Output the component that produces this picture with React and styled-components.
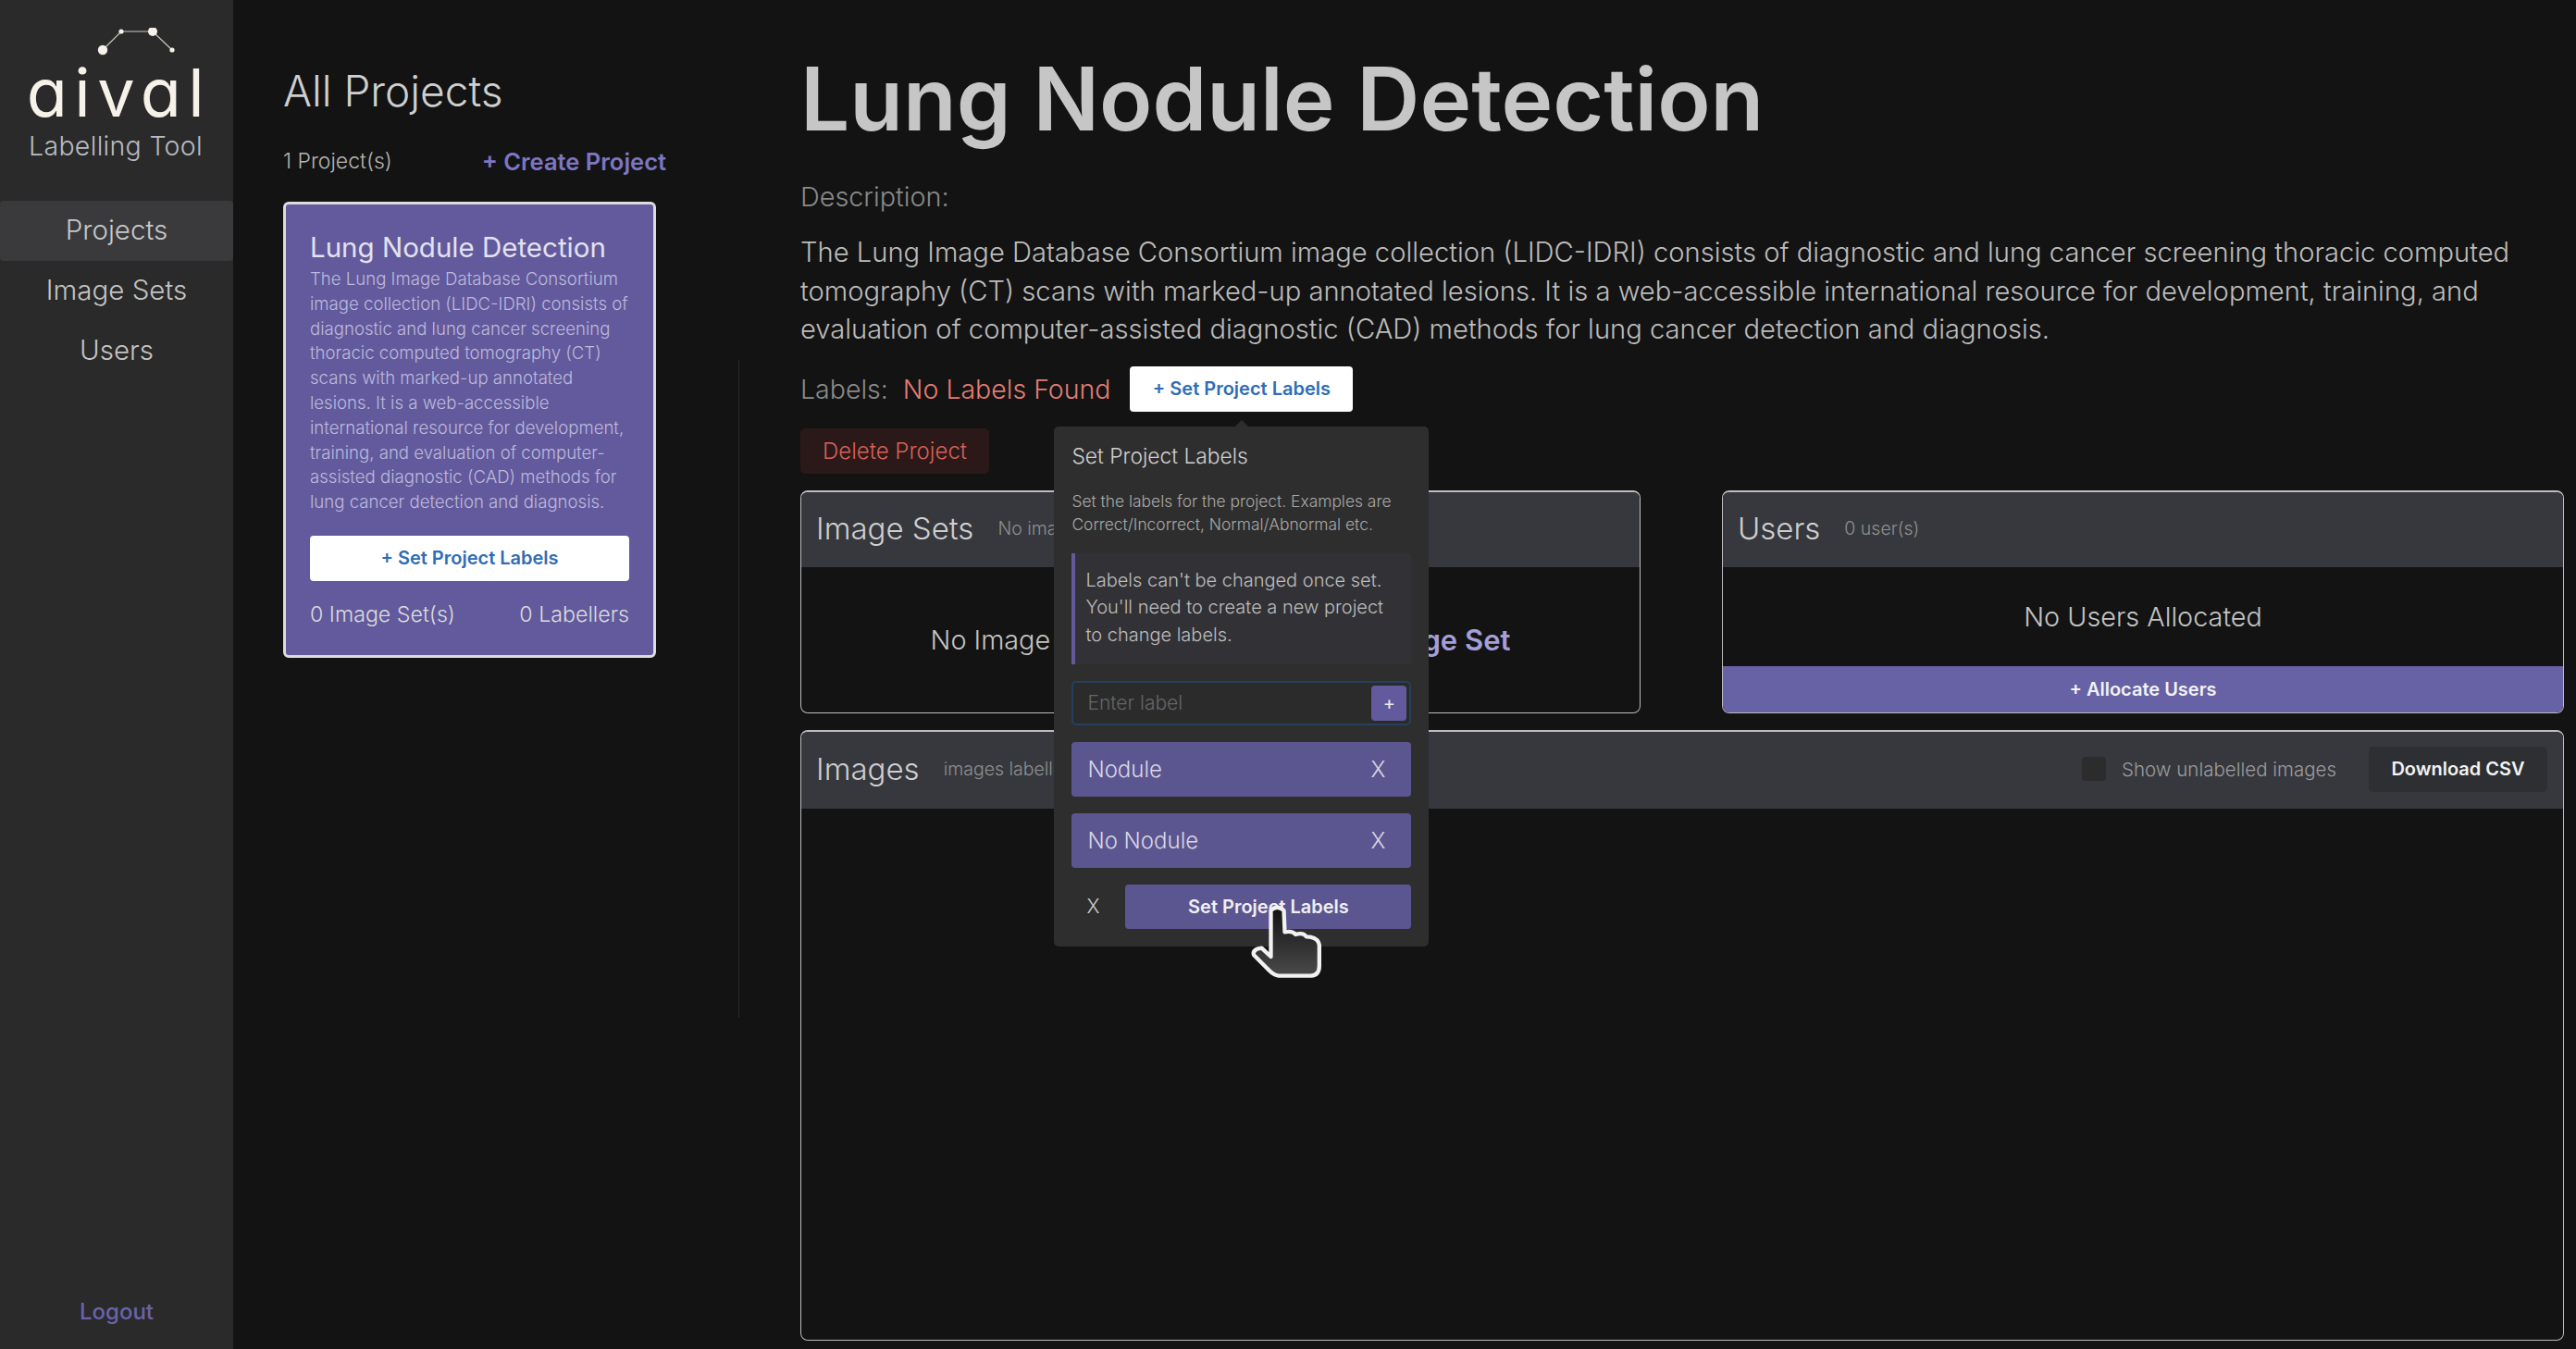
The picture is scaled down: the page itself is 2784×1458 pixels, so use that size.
import React from "react";
import styled, { createGlobalStyle } from "styled-components";

const GlobalStyle = createGlobalStyle`
  * { box-sizing: border-box; }
  html, body { margin: 0; padding: 0; background: #131313; }
  body { font-family: Inter, "Open Sans", "Liberation Sans", sans-serif; font-weight: 300; }
`;

const Page = styled.div`
  display: flex;
  width: 2784px;
  height: 1458px;
  overflow: hidden;
  position: relative;
  background: #131313;
`;

const Sidebar = styled.aside`
  width: 252px;
  flex: none;
  display: flex;
  flex-direction: column;
  background: #2a2a2a;
`;

const Logo = styled.div`
  height: 217px;
  display: flex;
  flex-direction: column;
  align-items: center;
  padding-top: 30px;
`;

const LogoMark = styled.svg`
  width: 100px;
  height: 32px;
  flex: none;
  margin-left: 48px;
`;

const LogoWord = styled.div`
  font-size: 72px;
  line-height: 72px;
  font-weight: 400;
  letter-spacing: 7.5px;
  margin: 2px -5px 0 0;
  color: #f6f2e9;
  font-feature-settings: "cv11" 1;
`;

const LogoSub = styled.div`
  font-size: 28.5px;
  line-height: 36px;
  margin: 4px 2px 0 0;
  color: #b8bcc2;
  letter-spacing: 0.3px;
`;

const NavItem = styled.div`
  height: 65px;
  padding-bottom: 4px;
  display: flex;
  align-items: center;
  justify-content: center;
  font-size: 29.5px;
  border-radius: 4px;
  color: ${(props) => (props.$active ? "#c8c8c8" : "#c4c4c4")};
  background: ${(props) => (props.$active ? "#3a3a3c" : "transparent")};
`;

const Logout = styled.div`
  margin-top: auto;
  padding-bottom: 25px;
  text-align: center;
  font-size: 24px;
  line-height: 30px;
  font-weight: 500;
  color: #6a63ab;
`;

const ProjectsColumn = styled.section`
  width: 547px;
  flex: none;
  padding: 70px 0 0 54px;
  position: relative;
`;

const ColumnTitle = styled.h2`
  margin: 0;
  font-size: 46px;
  line-height: 56px;
  font-weight: 300;
  color: #cfcfcf;
`;

const ColumnMeta = styled.div`
  display: flex;
  justify-content: space-between;
  align-items: center;
  width: 414px;
  height: 36px;
  margin-top: 30px;
  font-size: 23px;
  color: #b5b5b5;
`;

const CreateLink = styled.span`
  font-size: 25.5px;
  font-weight: 600;
  color: #7d76c4;
`;

const ProjectCard = styled.article`
  width: 403px;
  height: 493px;
  margin-top: 26px;
  padding: 28px 26px 0;
  background: #625a9c;
  border: 3px solid #dcdcdc;
  border-radius: 6px;
`;

const CardTitle = styled.h3`
  margin: 0;
  font-size: 29.5px;
  line-height: 36px;
  font-weight: 400;
  color: #e2e2ee;
`;

const CardText = styled.p`
  margin: 3px 0 0;
  font-size: 18.6px;
  line-height: 26.8px;
  color: #bdb9dc;
  white-space: nowrap;
`;

const WhiteButton = styled.button`
  display: block;
  width: ${(props) => props.$width || "100%"};
  height: 49px;
  padding: 0;
  border: 0;
  border-radius: 4px;
  background: #fff;
  color: #2f6db5;
  font-family: inherit;
  font-size: 20px;
  font-weight: 600;
`;

const CardButton = styled(WhiteButton)`
  margin-top: 23px;
`;

const CardFooter = styled.div`
  display: flex;
  justify-content: space-between;
  margin-top: 21px;
  font-size: 23.2px;
  line-height: 30px;
  color: #dcdcdc;
`;

const Divider = styled.div`
  position: absolute;
  right: 0;
  top: 389px;
  height: 711px;
  width: 1px;
  background: #2b2b2b;
`;

const Detail = styled.main`
  flex: 1;
  min-width: 0;
  padding: 52px 13px 0 66px;
`;

const DetailTitle = styled.h1`
  margin: 0;
  font-size: 94.3px;
  line-height: 110px;
  font-weight: 600;
  color: #c6c6c6;
`;

const SectionLabel = styled.div`
  margin-top: 31px;
  font-size: 28.8px;
  line-height: 40px;
  color: #8a8a8a;
`;

const Description = styled.p`
  margin: 19px 0 0;
  font-size: 29.15px;
  line-height: 41.5px;
  color: #bcbcbc;
  white-space: nowrap;
`;

const LabelsRow = styled.div`
  display: flex;
  align-items: center;
  height: 49px;
  margin-top: 19px;
  font-size: 28.5px;
`;

const LabelsCaption = styled.span`
  color: #8a8a8a;
`;

const NoLabels = styled.span`
  margin-left: 16px;
  color: #e37d74;
`;

const PopoverAnchor = styled.div`
  position: relative;
  margin-left: 21px;
`;

const Popover = styled.div`
  position: absolute;
  z-index: 3;
  top: 65px;
  left: -82px;
  width: 405px;
  height: 562px;
  padding: 15px 19px 0;
  background: #2e2e2e;
  border-radius: 5px;

  &::before {
    content: "";
    position: absolute;
    top: -7px;
    left: 196px;
    border-left: 7px solid transparent;
    border-right: 7px solid transparent;
    border-bottom: 7px solid #2e2e2e;
  }
`;

const PopoverTitle = styled.div`
  font-size: 22.8px;
  line-height: 34px;
  font-weight: 300;
  color: #d0d0d0;
`;

const PopoverText = styled.p`
  margin: 19px 0 0;
  font-size: 17.4px;
  line-height: 25px;
  color: #a9a9a9;
  white-space: nowrap;
`;

const Callout = styled.div`
  height: 120px;
  margin-top: 19px;
  padding: 15px 0 0 11px;
  background: #323236;
  border-left: 4px solid #625a9c;
  font-size: 20px;
  line-height: 29.5px;
  color: #bdbdbd;
  white-space: nowrap;
`;

const LabelInput = styled.div`
  display: flex;
  align-items: center;
  justify-content: space-between;
  height: 48px;
  margin-top: 18px;
  padding: 0 3px 0 15px;
  background: #2b2b2b;
  border: 2px solid #24405e;
  border-radius: 5px;
  font-size: 21px;
  color: #666;
`;

const PlusButton = styled.span`
  width: 38px;
  height: 38px;
  display: flex;
  align-items: center;
  justify-content: center;
  background: #625a9c;
  border-radius: 4px;
  color: #ececec;
  font-size: 20px;
  font-weight: 400;
`;

const LabelChip = styled.div`
  display: flex;
  align-items: center;
  justify-content: space-between;
  height: 59px;
  margin-top: 18px;
  padding: 0 28px 0 17px;
  background: #5c5690;
  border-radius: 4px;
  font-size: 24px;
  color: #d8d8e4;
`;

const PopoverFooter = styled.div`
  display: flex;
  align-items: center;
  height: 48px;
  margin-top: 18px;
`;

const CancelX = styled.span`
  width: 58px;
  padding-left: 16px;
  font-size: 21px;
  color: #cfcfcf;
`;

const SubmitButton = styled.button`
  flex: 1;
  height: 48px;
  padding: 0;
  border: 0;
  border-radius: 4px;
  background: #5c5690;
  color: #f0f0f0;
  font-family: inherit;
  font-size: 20px;
  font-weight: 600;
`;

const DeleteButton = styled.button`
  display: block;
  width: 204px;
  height: 49px;
  margin-top: 18px;
  padding: 0;
  border: 0;
  border-radius: 5px;
  background: #2a1918;
  color: #d9605a;
  font-family: inherit;
  font-size: 24px;
  font-weight: 300;
`;

const PanelGrid = styled.div`
  display: grid;
  grid-template-columns: 908px 910px;
  column-gap: 88px;
  margin-top: 18px;
`;

const Panel = styled.section`
  display: flex;
  flex-direction: column;
  height: ${(props) => props.$height}px;
  margin-top: ${(props) => props.$top || 0}px;
  border: 1px solid #bdbdbd;
  border-top-width: 2px;
  border-radius: 8px;
  overflow: hidden;
`;

const PanelHead = styled.header`
  display: flex;
  align-items: center;
  flex: none;
  height: ${(props) => props.$height || 81}px;
  padding: 0 4px 2px 16px;
  background: #36383d;
`;

const PanelTitle = styled.span`
  font-size: 33px;
  font-weight: 300;
  color: #cfcfcf;
`;

const PanelSub = styled.span`
  margin-left: 26px;
  font-size: 19.5px;
  color: #8f8f8f;
`;

const PanelBody = styled.div`
  flex: 1;
  display: flex;
  align-items: center;
  justify-content: center;
  gap: 52px;
  font-size: 28.8px;
  color: #c4c4c4;
`;

const AddLink = styled.span`
  font-size: 31px;
  font-weight: 600;
  color: #a49fd8;
`;

const PanelAction = styled.button`
  flex: none;
  height: 50px;
  padding: 0;
  border: 0;
  background: #6761a6;
  color: #f2f2f2;
  font-family: inherit;
  font-size: 20px;
  font-weight: 600;
`;

const HeadTools = styled.div`
  margin-left: auto;
  display: flex;
  align-items: center;
  padding-right: 13px;
`;

const CheckBox = styled.span`
  width: 26px;
  height: 26px;
  border-radius: 4px;
  background: #2c2c2c;
`;

const CheckLabel = styled.span`
  margin-left: 17px;
  font-size: 20.5px;
  color: #9c9c9c;
`;

const DownloadButton = styled.button`
  width: 193px;
  height: 49px;
  margin-left: 35px;
  padding: 0;
  border: 0;
  border-radius: 5px;
  background: #2d2f33;
  color: #f2f2f2;
  font-family: inherit;
  font-size: 20px;
  font-weight: 600;
`;

const HandCursor = styled.svg`
  position: absolute;
  z-index: 5;
  left: 1350px;
  top: 974px;
  width: 82px;
  height: 85px;
`;

const Constellation = () => (
  <LogoMark viewBox="0 0 100 32">
    <g stroke="#cfcabf" strokeWidth="1.2" fill="none">
      <path d="M11 24 L31 4 L65 4 L86 24" />
    </g>
    <g fill="#f6f2e9">
      <circle cx="11" cy="24" r="5.2" />
      <circle cx="31" cy="4" r="2.6" />
      <circle cx="65" cy="4" r="5" />
      <circle cx="86" cy="24" r="2.6" />
    </g>
  </LogoMark>
);

const Hand = () => (
  <HandCursor viewBox="270 100 245 255">
    <defs>
      <linearGradient id="handFill" x1="0" y1="0" x2="0" y2="1">
        <stop offset="0" stopColor="#111" />
        <stop offset="1" stopColor="#4a4a4a" />
      </linearGradient>
    </defs>
    <path
      d="M340 130 Q360 110 382 130 L385 200 Q410 195 420 208 Q445 200 455 215 Q492 215 497 242 L497 310 Q497 340 470 342 L365 342 Q350 340 335 325 L285 275 Q280 262 295 255 L310 252 L340 280 Z"
      fill="url(#handFill)"
      stroke="#f2f2f2"
      strokeWidth="13"
      strokeLinejoin="round"
    />
  </HandCursor>
);

const App = () => (
  <>
    <GlobalStyle />
    <Page>
      <Sidebar>
        <Logo>
          <Constellation />
          <LogoWord>aival</LogoWord>
          <LogoSub>Labelling Tool</LogoSub>
        </Logo>
        <NavItem $active>Projects</NavItem>
        <NavItem>Image Sets</NavItem>
        <NavItem>Users</NavItem>
        <Logout>Logout</Logout>
      </Sidebar>

      <ProjectsColumn>
        <ColumnTitle>All Projects</ColumnTitle>
        <ColumnMeta>
          <span>1 Project(s)</span>
          <CreateLink>+ Create Project</CreateLink>
        </ColumnMeta>
        <ProjectCard>
          <CardTitle>Lung Nodule Detection</CardTitle>
          <CardText>
            The Lung Image Database Consortium<br />
            image collection (LIDC-IDRI) consists of<br />
            diagnostic and lung cancer screening<br />
            thoracic computed tomography (CT)<br />
            scans with marked-up annotated<br />
            lesions. It is a web-accessible<br />
            international resource for development,<br />
            training, and evaluation of computer-<br />
            assisted diagnostic (CAD) methods for<br />
            lung cancer detection and diagnosis.
          </CardText>
          <CardButton>+ Set Project Labels</CardButton>
          <CardFooter>
            <span>0 Image Set(s)</span>
            <span>0 Labellers</span>
          </CardFooter>
        </ProjectCard>
        <Divider />
      </ProjectsColumn>

      <Detail>
        <DetailTitle>Lung Nodule Detection</DetailTitle>
        <SectionLabel>Description:</SectionLabel>
        <Description>
          The Lung Image Database Consortium image collection (LIDC-IDRI) consists of diagnostic and lung cancer screening thoracic computed<br />
          tomography (CT) scans with marked-up annotated lesions. It is a web-accessible international resource for development, training, and<br />
          evaluation of computer-assisted diagnostic (CAD) methods for lung cancer detection and diagnosis.
        </Description>
        <LabelsRow>
          <LabelsCaption>Labels:</LabelsCaption>
          <NoLabels>No Labels Found</NoLabels>
          <PopoverAnchor>
            <WhiteButton $width="241px">+ Set Project Labels</WhiteButton>
            <Popover>
              <PopoverTitle>Set Project Labels</PopoverTitle>
              <PopoverText>
                Set the labels for the project. Examples are<br />
                Correct/Incorrect, Normal/Abnormal etc.
              </PopoverText>
              <Callout>
                Labels can't be changed once set.<br />
                You'll need to create a new project<br />
                to change labels.
              </Callout>
              <LabelInput>
                Enter label
                <PlusButton>+</PlusButton>
              </LabelInput>
              <LabelChip>Nodule<span>X</span></LabelChip>
              <LabelChip>No Nodule<span>X</span></LabelChip>
              <PopoverFooter>
                <CancelX>X</CancelX>
                <SubmitButton>Set Project Labels</SubmitButton>
              </PopoverFooter>
            </Popover>
          </PopoverAnchor>
        </LabelsRow>
        <DeleteButton>Delete Project</DeleteButton>
        <PanelGrid>
          <Panel $height={241}>
            <PanelHead>
              <PanelTitle>Image Sets</PanelTitle>
              <PanelSub>No image sets</PanelSub>
            </PanelHead>
            <PanelBody>
              <span>No Image Sets Allocated</span>
              <AddLink>+ Add Image Set</AddLink>
            </PanelBody>
          </Panel>
          <Panel $height={241}>
            <PanelHead>
              <PanelTitle>Users</PanelTitle>
              <PanelSub>0 user(s)</PanelSub>
            </PanelHead>
            <PanelBody>No Users Allocated</PanelBody>
            <PanelAction>+ Allocate Users</PanelAction>
          </Panel>
        </PanelGrid>
        <Panel $height={660} $top={18}>
          <PanelHead $height={83}>
            <PanelTitle>Images</PanelTitle>
            <PanelSub>images labelled</PanelSub>
            <HeadTools>
              <CheckBox />
              <CheckLabel>Show unlabelled images</CheckLabel>
              <DownloadButton>Download CSV</DownloadButton>
            </HeadTools>
          </PanelHead>
        </Panel>
      </Detail>
      <Hand />
    </Page>
  </>
);

export default App;
